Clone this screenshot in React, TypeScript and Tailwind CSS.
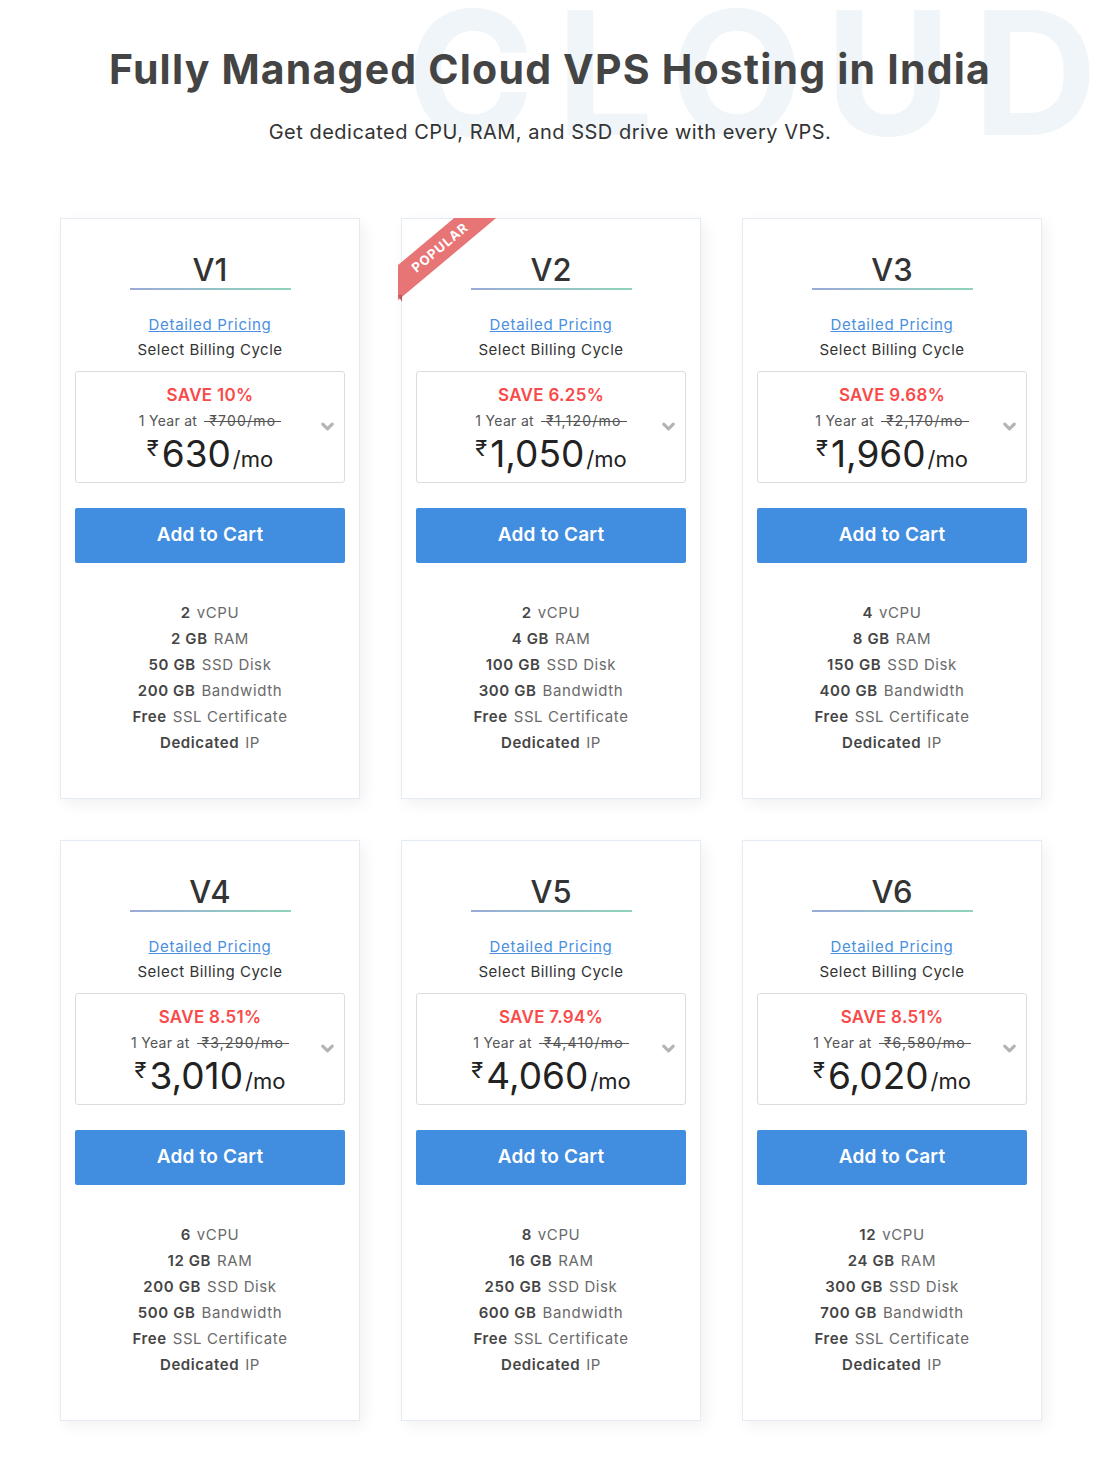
import { ChevronDown } from 'lucide-react';

interface Plan {
  name: string;
  save: string;
  was: string;
  price: string;
  cpu: string;
  ram: string;
  disk: string;
  bw: string;
  popular?: boolean;
}

const plans: Plan[] = [
  { name: 'V1', save: '10%', was: '700', price: '630', cpu: '2', ram: '2 GB', disk: '50 GB', bw: '200 GB' },
  { name: 'V2', save: '6.25%', was: '1,120', price: '1,050', cpu: '2', ram: '4 GB', disk: '100 GB', bw: '300 GB', popular: true },
  { name: 'V3', save: '9.68%', was: '2,170', price: '1,960', cpu: '4', ram: '8 GB', disk: '150 GB', bw: '400 GB' },
  { name: 'V4', save: '8.51%', was: '3,290', price: '3,010', cpu: '6', ram: '12 GB', disk: '200 GB', bw: '500 GB' },
  { name: 'V5', save: '7.94%', was: '4,410', price: '4,060', cpu: '8', ram: '16 GB', disk: '250 GB', bw: '600 GB' },
  { name: 'V6', save: '8.51%', was: '6,580', price: '6,020', cpu: '12', ram: '24 GB', disk: '300 GB', bw: '700 GB' },
];

function Feature({ strong, label }: { strong: string; label: string }) {
  return (
    <div className="flex justify-center gap-[6px] leading-[26px] tracking-[0.6px]">
      <span className="font-semibold text-[#454545]">{strong}</span>
      <span className="text-[#6a6a6a]">{label}</span>
    </div>
  );
}

function PlanCard({ plan }: { plan: Plan }) {
  return (
    <div className="relative w-[300px] h-[581px] bg-white border border-[#e4ebf3] shadow-[4px_5px_14px_rgba(0,0,0,0.06)] px-[14px]">
      {plan.popular && (
        <>
          <div className="absolute left-[-4px] top-[-1px] w-[110px] h-[90px] overflow-hidden">
            <div className="absolute left-[-38px] top-[16px] w-[160px] h-[27px] bg-[#e87575] -rotate-[40deg] flex items-center justify-center text-white text-[13px] font-bold tracking-[1px]">
              POPULAR
            </div>
          </div>
          {/* folded tail */}
          <div className="absolute left-[-4px] top-[76px] w-0 h-0 border-t-[7px] border-t-[#b65858] border-l-[4px] border-l-transparent"></div>
        </>
      )}

      {/* title */}
      <div className="pt-[33px] flex flex-col items-center">
        <h2 className="text-[31px] leading-[36px] font-medium text-[#333]">{plan.name}</h2>
        <div className="w-[161px] h-[2px] bg-gradient-to-r from-[#9aaad8] to-[#8fd5b7]"></div>
      </div>

      <div className="mt-[24px] text-center text-[15px] leading-[22px] tracking-[0.7px]">
        <a href="#" className="text-[#4a8fe0] underline">Detailed Pricing</a>
      </div>
      <div className="mt-[3px] text-center text-[15px] leading-[22px] tracking-[0.5px] text-[#333]">Select Billing Cycle</div>

      {/* billing select */}
      <div className="relative mt-[10px] h-[112px] border border-[#dcdcdc] rounded-[3px] flex flex-col items-center pt-[11px]">
        <div className="text-[17px] leading-[24px] font-semibold text-[#f94a4a] tracking-[0.3px]">SAVE {plan.save}</div>
        <div className="mt-[4px] text-[14px] leading-[20px] text-[#555] flex items-center">
          <span className="tracking-[0.3px]">1 Year at</span>
          <span className="relative ml-[7px] px-[5px] tracking-[1.2px]">
            ₹{plan.was}/mo
            <span className="absolute left-0 right-0 top-[10px] h-px bg-[#555]"></span>
          </span>
        </div>
        <div className="mt-[2px] flex items-baseline text-[#222]">
          <span className="text-[22px] self-start leading-[22px] mt-[4px] mr-[3px]">₹</span>
          <span className="text-[37px] leading-[42px]">{plan.price}</span>
          <span className="text-[22px] leading-[22px] ml-[2px]">/mo</span>
        </div>
        <ChevronDown className="absolute right-[7px] top-[45px] w-[19px] h-[19px] text-[#b4b4b4]" strokeWidth={4} />
      </div>

      <button className="mt-[25px] w-full h-[55px] bg-[#418de0] rounded-[2px] text-white text-[19px] font-semibold tracking-[0.2px]">
        Add to Cart
      </button>

      <div className="mt-[37px] text-[15px]">
        <Feature strong={plan.cpu} label="vCPU" />
        <Feature strong={plan.ram} label="RAM" />
        <Feature strong={plan.disk} label="SSD Disk" />
        <Feature strong={plan.bw} label="Bandwidth" />
        <Feature strong="Free" label="SSL Certificate" />
        <Feature strong="Dedicated" label="IP" />
      </div>
    </div>
  );
}

export default function App() {
  return (
    <div className="w-[1100px] min-h-[1459px] bg-white font-['Inter',sans-serif] overflow-hidden">
      {/* header */}
      <div className="relative h-[218px]">
        <div aria-hidden="true" className="absolute left-[407px] top-[-23px] text-[172px] leading-[190px] font-bold tracking-[22px] text-[#eff5f8] select-none whitespace-nowrap">
          CLOUD
        </div>
        <div className="relative pt-[44px] text-center">
          <h1 className="text-[41px] leading-[50px] font-bold tracking-[1.2px] text-[#444]">Fully Managed Cloud VPS Hosting in India</h1>
          <p className="mt-[25px] text-[20px] leading-[26px] tracking-[0.5px] text-[#333]">Get dedicated CPU, RAM, and SSD drive with every VPS.</p>
        </div>
      </div>

      <div className="pl-[60px] grid grid-cols-[300px_300px_300px] gap-x-[41px] gap-y-[41px]">
        {plans.map((p) => (
          <PlanCard key={p.name} plan={p} />
        ))}
      </div>
    </div>
  );
}
